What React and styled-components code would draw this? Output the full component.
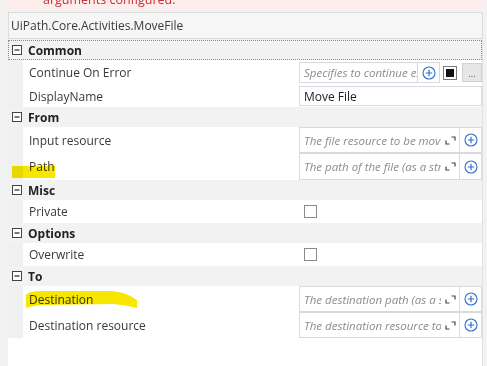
import React from 'react';
import styled, { createGlobalStyle } from 'styled-components';

const GlobalStyle = createGlobalStyle`
  html, body {
    margin: 0;
    padding: 0;
    background: #f2f2f2;
  }
  body {
    font-family: "Segoe UI", "Open Sans", "Noto Sans", sans-serif;
    font-size: 11.5px;
    color: #333;
  }
`;

const Page = styled.div`
  position: relative;
  width: 487px;
  height: 366px;
  overflow: hidden;
  box-sizing: border-box;
  padding: 0 4px 0 8px;
  display: flex;
  flex-direction: column;
`;

const Banner = styled.div`
  flex: none;
  height: 10px;
  background: #fdeded;
  overflow: hidden;
`;

const BannerText = styled.div`
  color: #c9302c;
  font-size: 12.5px;
  line-height: 16px;
  margin-top: -8px;
  padding-left: 35px;
`;

const Header = styled.div`
  flex: none;
  margin-top: 2px;
  height: 27px;
  box-sizing: border-box;
  border: 1px solid #dcdcdc;
  background: #f6f6f6;
  padding-left: 2px;
  display: flex;
  align-items: center;
  color: #3a3a3a;
  font-size: 12px;
`;

const Grid = styled.div`
  flex: 1;
  margin-top: 1px;
  background: #fff;
  border-right: 1px solid #e2e2e2;
  display: flex;
  flex-direction: column;
`;

const Category = styled.div`
  flex: none;
  height: 20px;
  box-sizing: border-box;
  background: #f2f2f2;
  display: flex;
  align-items: center;
  gap: 6px;
  padding-left: 4px;
  font-weight: 700;
  font-size: 12px;
  color: #222;
  outline: ${(p) => (p.focused ? '1px dotted #8a8a8a' : 'none')};
  outline-offset: -1px;
`;

const PropRow = styled.div`
  flex: none;
  height: ${(p) => p.h}px;
  display: grid;
  grid-template-columns: 15px 276px 1fr;
`;

const Indent = styled.div`
  background: #f0f0f0;
`;

const Label = styled.div`
  padding-left: 6px;
  display: flex;
  align-items: center;
  color: #3a3a3a;
  font-size: 12px;
`;

const Value = styled.div`
  display: flex;
  align-items: center;
`;

const Field = styled.div`
  display: flex;
  width: ${(p) => p.w || 183}px;
  height: ${(p) => p.h}px;
  box-sizing: border-box;
  border: 1px solid #d6dbe1;
  background: #fff;
`;

const FieldText = styled.div`
  flex: 1;
  min-width: 0;
  overflow: hidden;
  white-space: nowrap;
  padding-left: 4px;
  display: flex;
  align-items: center;
  font-style: ${(p) => (p.placeholder ? 'italic' : 'normal')};
  color: ${(p) => (p.placeholder ? '#8c8c8c' : '#222')};
  font-size: ${(p) => (p.placeholder ? '11.5px' : '12px')};
`;

const ExpandSlot = styled.div`
  flex: none;
  width: 18px;
  display: flex;
  align-items: center;
  justify-content: center;
`;

const FieldButton = styled.div`
  flex: none;
  width: 21px;
  border-left: 1px solid #d6dbe1;
  display: flex;
  align-items: center;
  justify-content: center;
`;

const SquareToggle = styled.div`
  margin-left: 3px;
  width: 14px;
  height: 14px;
  box-sizing: border-box;
  border: 1px solid #7a7a7a;
  display: flex;
  align-items: center;
  justify-content: center;
  &::after {
    content: '';
    width: 8px;
    height: 8px;
    background: #111;
  }
`;

const DotsButton = styled.div`
  margin-left: 5px;
  width: 20px;
  height: 19px;
  box-sizing: border-box;
  border: 1px solid #d0d0d0;
  background: #e6e6e6;
  color: #555;
  font-size: 9px;
  line-height: 9px;
  display: flex;
  align-items: flex-end;
  justify-content: center;
  padding-bottom: 3px;
`;

const CheckBox = styled.div`
  margin-left: 5px;
  width: 13px;
  height: 13px;
  box-sizing: border-box;
  border: 1px solid #8a8a8a;
  background: #fff;
`;

const Highlight = styled.svg`
  position: absolute;
  left: 0;
  top: 0;
  mix-blend-mode: multiply;
  pointer-events: none;
`;

const MinusBox = () => (
  <svg width="10" height="10" viewBox="0 0 10 10">
    <rect x="0.5" y="0.5" width="9" height="9" fill="#fff" stroke="#444" />
    <path d="M2.5 5h5" stroke="#222" strokeWidth="1.2" />
  </svg>
);

const PlusCircle = () => (
  <svg width="14" height="14" viewBox="0 0 14 14">
    <circle cx="7" cy="7" r="6" fill="none" stroke="#2f6fd0" strokeWidth="1.1" />
    <path d="M7 3.8v6.4M3.8 7h6.4" stroke="#2f6fd0" strokeWidth="1.2" />
  </svg>
);

const ExpandIcon = () => (
  <svg width="11" height="9" viewBox="0 0 11 9">
    <path d="M1 4.5V8h3.5M6.5 1H10v3.5" fill="none" stroke="#444" strokeWidth="1.2" />
  </svg>
);

const InputField = ({ text, h }) => (
  <Field h={h}>
    <FieldText placeholder>{text}</FieldText>
    <ExpandSlot>
      <ExpandIcon />
    </ExpandSlot>
    <FieldButton>
      <PlusCircle />
    </FieldButton>
  </Field>
);

const CategoryRow = ({ name, focused }) => (
  <Category focused={focused}>
    <MinusBox />
    {name}
  </Category>
);

const Prop = ({ label, h, children }) => (
  <PropRow h={h}>
    <Indent />
    <Label>{label}</Label>
    <Value>{children}</Value>
  </PropRow>
);

const App = () => {
  return (
    <Page>
      <GlobalStyle />
      <Banner>
        <BannerText>arguments configured.</BannerText>
      </Banner>
      <Header>UiPath.Core.Activities.MoveFile</Header>
      <Grid>
        <CategoryRow name="Common" focused />
        <Prop label="Continue On Error" h={25}>
          <Field h={21} w={141}>
            <FieldText placeholder>Specifies to continue executing</FieldText>
            <FieldButton>
              <PlusCircle />
            </FieldButton>
          </Field>
          <SquareToggle />
          <DotsButton>...</DotsButton>
        </Prop>
        <Prop label="DisplayName" h={22}>
          <Field h={20}>
            <FieldText>Move File</FieldText>
          </Field>
        </Prop>
        <CategoryRow name="From" />
        <Prop label="Input resource" h={26}>
          <InputField h={26} text="The file resource to be moved" />
        </Prop>
        <Prop label="Path" h={27}>
          <InputField h={27} text="The path of the file (as a string)" />
        </Prop>
        <CategoryRow name="Misc" />
        <Prop label="Private" h={23}>
          <CheckBox />
        </Prop>
        <CategoryRow name="Options" />
        <Prop label="Overwrite" h={23}>
          <CheckBox />
        </Prop>
        <CategoryRow name="To" />
        <Prop label="Destination" h={26}>
          <InputField h={26} text="The destination path (as a string)" />
        </Prop>
        <Prop label="Destination resource" h={26}>
          <InputField h={26} text="The destination resource to move to" />
        </Prop>
      </Grid>
      <Highlight width="487" height="366" viewBox="0 0 487 366">
        <rect x="12" y="166" width="43" height="12" fill="#f6e600" />
        <path
          d="M26 295 Q29 291 42 291 L112 291 Q126 292 137 300 L137 308 Q127 305 113 304 L42 305 Q31 306 26 308 Z"
          fill="#f6e600"
        />
      </Highlight>
    </Page>
  );
};

export default App;
